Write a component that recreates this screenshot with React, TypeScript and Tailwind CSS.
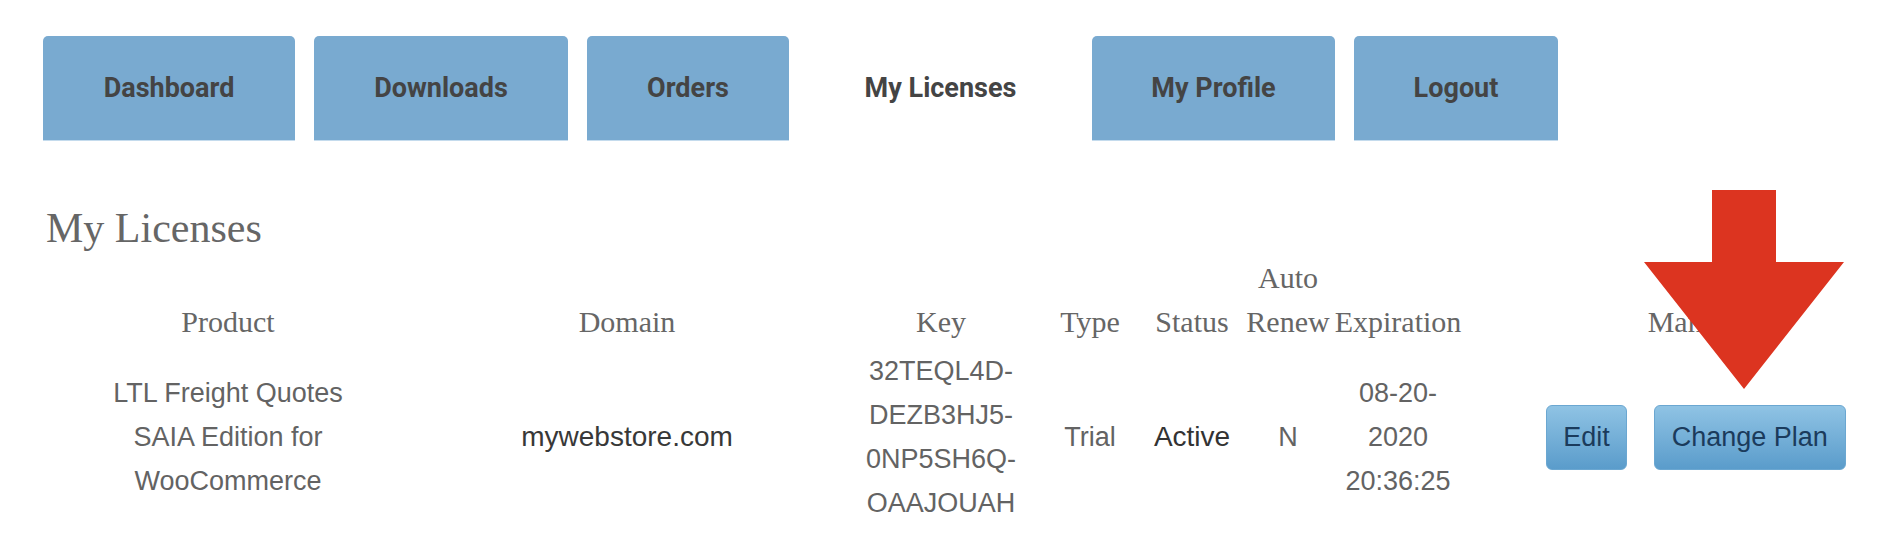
import React from "react";

const tabs = [
  { label: "Dashboard", w: "w-[252px]" },
  { label: "Downloads", w: "w-[254px]" },
  { label: "Orders", w: "w-[202px]" },
  { label: "My Licenses", w: "w-[265px]", active: true },
  { label: "My Profile", w: "w-[243px]" },
  { label: "Logout", w: "w-[204px]" },
];

const keyLines = ["32TEQL4D-", "DEZB3HJ5-", "0NP5SH6Q-", "OAAJOUAH"];
const productLines = ["LTL Freight Quotes", "SAIA Edition for", "WooCommerce"];
const expiryLines = ["08-20-", "2020", "20:36:25"];

function Lines({ lines }: { lines: string[] }) {
  return (
    <div className="flex flex-col items-center">
      {lines.map((l) => (
        <span key={l}>{l}</span>
      ))}
    </div>
  );
}

export default function App() {
  return (
    <div className="relative h-[552px] w-[1888px] overflow-hidden bg-white">
      <nav className="flex gap-[19px] pl-[43px] pt-[36px]">
        {tabs.map((t) =>
          t.active ? (
            <div
              key={t.label}
              className={`${t.w} flex h-[105px] items-center justify-center font-['Roboto',sans-serif] text-[27px] font-bold text-[#444]`}
            >
              {t.label}
            </div>
          ) : (
            <a
              key={t.label}
              href="#"
              className={`${t.w} flex h-[105px] items-center justify-center rounded-t-[5px] border-b border-[#c4dbed] bg-[#79aad0] font-['Roboto',sans-serif] text-[27px] font-bold text-[#444]`}
            >
              {t.label}
            </a>
          )
        )}
      </nav>

      <main className="pl-[46px]">
        <h1 className="mt-[66px] font-['Liberation_Serif',serif] text-[42px] leading-[42px] font-normal text-[#666]">
          My Licenses
        </h1>

        <div className="mt-[7px] grid grid-cols-[364px_434px_194px_104px_100px_92px_128px_426px] items-end text-center font-['Liberation_Serif',serif] text-[30px] leading-[44px] text-[#666]">
          <div>Product</div>
          <div>Domain</div>
          <div>Key</div>
          <div>Type</div>
          <div>Status</div>
          <div className="flex flex-col">
            <span>Auto</span>
            <span>Renew</span>
          </div>
          <div>Expiration</div>
          <div className="pl-[42px]">Manage</div>
        </div>

        <div className="mt-[5px] grid grid-cols-[364px_434px_194px_104px_100px_92px_128px_426px] items-center text-center font-['Liberation_Sans',Arial,sans-serif] text-[27px] leading-[44px] text-[#636363]">
          <Lines lines={productLines} />
          <div className="text-[28px] text-[#383838]">mywebstore.com</div>
          <Lines lines={keyLines} />
          <div>Trial</div>
          <div className="text-[28px] text-[#333]">Active</div>
          <div>N</div>
          <Lines lines={expiryLines} />
          <div className="flex justify-center gap-[27px] pl-[42px]">
            <button className="h-[65px] rounded-[6px] border border-[#6ba7d1] bg-linear-to-b from-[#8fc3e4] to-[#5a9ccb] px-[16px] text-[27px] text-[#1b3b5c]">
              Edit
            </button>
            <button className="h-[65px] rounded-[6px] border border-[#6ba7d1] bg-linear-to-b from-[#8fc3e4] to-[#5a9ccb] px-[17px] text-[27px] text-[#1b3b5c]">
              Change Plan
            </button>
          </div>
        </div>
      </main>

      <svg
        className="absolute left-[1644px] top-[190px]"
        width="200"
        height="199"
        viewBox="0 0 200 199"
      >
        <path d="M68 0H132V72H200L100 199L0 72H68Z" fill="#dc3420" />
      </svg>
    </div>
  );
}
